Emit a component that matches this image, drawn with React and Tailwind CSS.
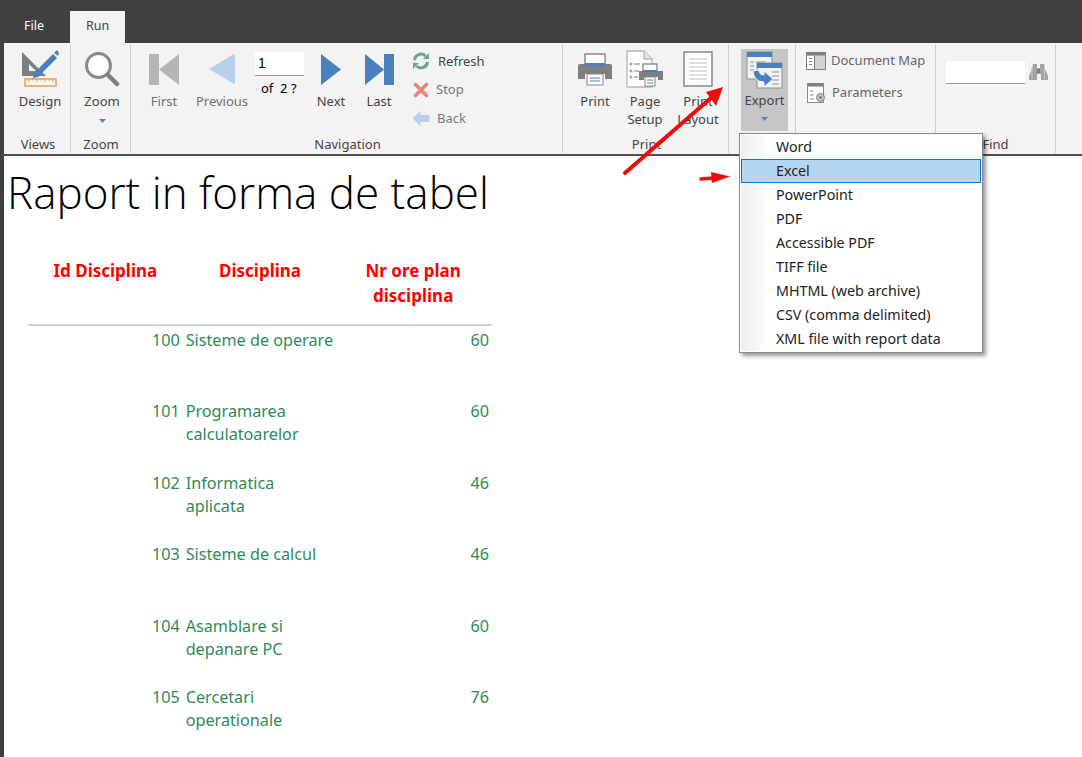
import React from 'react';

const DesignIcon = () => (
  <svg width="40" height="40" viewBox="0 0 40 40">
    <path d="M2 3 L2 27 L26 27 Z M9 15 L9 22 L16 22 Z" fill="#7f7f7f" fillRule="evenodd" />
    <path d="M14 24 L33 5 L37 9 L18 28 L13 29 Z" fill="#4a80bd" />
    <path d="M34 4 L37 1 L39 4 L38 7 Z" fill="#4a80bd" />
    <rect x="5" y="30" width="31" height="7" fill="#fdf6ee" stroke="#ee9d57" strokeWidth="1.500" />
    <path d="M9 30v3M13 30v2M17 30v3M21 30v2M25 30v3M29 30v2M33 30v3" stroke="#ee9d57" strokeWidth="1" />
  </svg>
);

const ZoomIcon = () => (
  <svg width="36" height="36" viewBox="0 0 36 36">
    <circle cx="14.500" cy="14.500" r="12" fill="#fff" stroke="#8a8a8a" strokeWidth="3" />
    <path d="M24 24 L33 33" stroke="#7f7f7f" strokeWidth="4.500" strokeLinecap="round" />
  </svg>
);

const FirstIcon = () => (
  <svg width="32" height="33" viewBox="0 0 32 33">
    <path d="M1 1h10v31H1z M11 16.500 L31 1 V32 Z" fill="#b5b5b5" />
  </svg>
);

const PrevIcon = () => (
  <svg width="28" height="32" viewBox="0 0 28 32">
    <path d="M1 16 L26 1 Q27 1 27 2 V30 Q27 31 26 31 Z" fill="#b9cfee" />
  </svg>
);

const NextIcon = () => (
  <svg width="22" height="33" viewBox="0 0 22 33">
    <path d="M1 1 L21 16.500 L1 32 Z" fill="#4a80bd" />
  </svg>
);

const LastIcon = () => (
  <svg width="31" height="33" viewBox="0 0 31 33">
    <path d="M1 1 L20 16.500 L1 32 Z M20 1h10v31H20z" fill="#4a80bd" />
  </svg>
);

const RefreshIcon = () => (
  <svg width="18" height="18" viewBox="0 0 18 18" fill="none">
    <path d="M2.500 8 A6.500 6.500 0 0 1 13.500 4" stroke="#68a88d" strokeWidth="3" />
    <path d="M11 7h6V1z" fill="#68a88d" />
    <path d="M15.500 10 A6.500 6.500 0 0 1 4.500 14" stroke="#68a88d" strokeWidth="3" />
    <path d="M7 11H1v6z" fill="#68a88d" />
  </svg>
);

const StopIcon = () => (
  <svg width="16" height="16" viewBox="0 0 16 16">
    <path d="M2.500 2.500 L13.500 13.500 M13.500 2.500 L2.500 13.500" stroke="#e8847a" strokeWidth="3.600" strokeLinecap="round" />
  </svg>
);

const BackIcon = () => (
  <svg width="18" height="17" viewBox="0 0 18 17">
    <path d="M0.500 8.500 L8.500 1 V5 H17.500 V12 H8.500 V16 Z" fill="#b9cfee" />
  </svg>
);

const PrintIcon = () => (
  <svg width="36" height="33" viewBox="0 0 36 33">
    <rect x="8" y="1" width="20" height="14" fill="#fff" stroke="#8a8a8a" strokeWidth="1.500" />
    <path d="M3 11h30a2 2 0 0 1 2 2v13H28v-5H8v5H1V13a2 2 0 0 1 2-2z" fill="#7f7f7f" />
    <rect x="8" y="10" width="20" height="3" fill="#4a80bd" />
    <rect x="10" y="21" width="16" height="11" fill="#fff" stroke="#8a8a8a" />
    <path d="M13 25h10M13 28h10" stroke="#4a80bd" strokeWidth="1.200" />
  </svg>
);

const PageSetupIcon = () => (
  <svg width="38" height="38" viewBox="0 0 38 38">
    <path d="M1 1h17l8 8v28H1z" fill="#fff" stroke="#b5b5b5" strokeWidth="1.300" />
    <path d="M18 1v8h8" fill="#e4e4e4" stroke="#b5b5b5" strokeWidth="1.300" />
    <path d="M8 14h6M8 21h5M8 27h4" stroke="#a5a5a5" strokeWidth="1.400" />
    <circle cx="5" cy="14" r="1.600" fill="#a5a5a5" />
    <circle cx="5" cy="21" r="1.600" fill="#a5a5a5" />
    <circle cx="5" cy="27" r="1.600" fill="#a5a5a5" />
    <rect x="17" y="14" width="14" height="10" fill="#fff" stroke="#7f7f7f" strokeWidth="1.300" />
    <path d="M13 21h24v9h-5v-3H18v3h-5z" fill="#7f7f7f" />
    <rect x="17" y="20" width="14" height="2" fill="#4a80bd" />
    <rect x="19" y="27" width="10" height="9" fill="#fff" stroke="#8a8a8a" />
    <path d="M21 30h6M21 33h6" stroke="#4a80bd" />
  </svg>
);

const PrintLayoutIcon = () => (
  <svg width="30" height="36" viewBox="0 0 30 36">
    <rect x="1" y="1" width="28" height="34" fill="#fff" stroke="#8f8f8f" strokeWidth="1.600" />
    <path d="M6 8h18M6 12h18M6 16h18M6 20h18M6 24h18M6 28h18" stroke="#bdbdbd" strokeWidth="1.200" />
  </svg>
);

const ExportIcon = () => (
  <svg width="37" height="38" viewBox="0 0 37 38">
    <rect x="1" y="1" width="25" height="27" fill="#f2f2f2" stroke="#8f8f8f" />
    <rect x="1" y="1" width="25" height="5" fill="#4a80bd" />
    <path d="M4 11h4M4 15h4M4 19h4M10 11h10" stroke="#8f8f8f" strokeWidth="1.200" />
    <rect x="11" y="12" width="25" height="25" fill="#f2f2f2" stroke="#8f8f8f" />
    <rect x="11" y="12" width="25" height="5" fill="#4a80bd" />
    <path d="M26 21h7M26 25h7M26 29h7M26 33h7" stroke="#8f8f8f" strokeWidth="1.200" />
    <path d="M7 20 L13 19 Q13 24 18 24 V20 L27 28 L18 36 V31 Q8 31 7 20z" fill="#4a80bd" stroke="#f2f2f2" strokeWidth="1" />
  </svg>
);

const DocMapIcon = () => (
  <svg width="20" height="18" viewBox="0 0 20 18">
    <rect x="0.500" y="0.500" width="19" height="17" fill="#d4d4d4" stroke="#7f7f7f" />
    <rect x="0.500" y="0.500" width="19" height="3" fill="#7f7f7f" />
    <rect x="1" y="4" width="7" height="13" fill="#fff" />
    <path d="M3 6.500h3M3 9.500h3M3 12.500h3M8.500 4v13" stroke="#7f7f7f" />
  </svg>
);

const ParamsIcon = () => (
  <svg width="19" height="20" viewBox="0 0 19 20">
    <rect x="0.500" y="0.500" width="16" height="19" fill="#fff" stroke="#8a8a8a" />
    <rect x="0.500" y="0.500" width="16" height="3" fill="#7f7f7f" />
    <path d="M3 8h3M3 12h4M3 16h4" stroke="#8a8a8a" />
    <circle cx="13.500" cy="14.500" r="4" fill="#c4c4c4" stroke="#7f7f7f" />
    <circle cx="13.500" cy="14.500" r="1.400" fill="#7f7f7f" />
  </svg>
);

const BinocularsIcon = () => (
  <svg width="19" height="18" viewBox="0 0 19 18">
    <path d="M4 1h4v4h3V1h4l1 5 3 7v4h-7v-6H8v6H0v-4l3-7z" fill="#a3a3a3" />
    <path d="M8 6h3v4H8z" fill="#7f7f7f" />
    <path d="M3 3v13M15.500 3v13" stroke="#c8c8c8" />
  </svg>
);

const Caret = () => (
  <svg width="7" height="4" viewBox="0 0 7 4" className="mx-auto">
    <path d="M0 0h7L3.500 4z" fill="#5a82bf" />
  </svg>
);

function BigButton({ icon, label, width, muted }) {
  return (
    <div className={`flex flex-col items-center ${width}`}>
      <div className="flex h-[42px] items-center justify-center">{icon}</div>
      <div className={`mt-[2px] text-center leading-[18px] ${muted ? 'text-[#6f6f6f]' : 'text-[#444]'}`}>{label}</div>
    </div>
  );
}

function SmallButton({ icon, label, muted, textGap = 'ml-[3px]' }) {
  return (
    <div className={`flex h-[29px] items-center ${muted ? 'text-[#777]' : 'text-[#444]'}`}>
      <div className="flex w-[24px] justify-center">{icon}</div>
      <span className={textGap}>{label}</span>
    </div>
  );
}

function Group({ width, label, children, className = '', labelClass = '' }) {
  return (
    <div className={`relative flex h-[108px] shrink-0 flex-col border-r border-[#cdcdcd] ${width}`}>
      <div className={`flex h-[88px] ${className}`}>{children}</div>
      <div className={`mt-auto h-[20px] text-center leading-[22px] text-[#444] ${labelClass}`}>{label}</div>
    </div>
  );
}

const menuItems = ['Word', 'Excel', 'PowerPoint', 'PDF', 'Accessible PDF', 'TIFF file', 'MHTML (web archive)', 'CSV (comma delimited)', 'XML file with report data'];

const rows = [
  { id: 100, name: ['Sisteme de operare'], hours: 60 },
  { id: 101, name: ['Programarea', 'calculatoarelor'], hours: 60 },
  { id: 102, name: ['Informatica', 'aplicata'], hours: 46 },
  { id: 103, name: ['Sisteme de calcul'], hours: 46 },
  { id: 104, name: ['Asamblare si', 'depanare PC'], hours: 60 },
  { id: 105, name: ['Cercetari', 'operationale'], hours: 76 },
];

export default function App() {
  return (
    <div className="relative h-[757px] w-[1082px] overflow-hidden bg-white font-['Noto_Sans',sans-serif] text-[13px]">
      {/* Tabs */}
      <div className="flex h-[43px] items-end bg-[#404040]">
        <div className="flex h-[32px] w-[70px] items-start justify-center pt-[6px] pr-[2px] text-[12.5px] text-white">File</div>
        <div className="flex h-[32px] w-[55px] items-start justify-center bg-[#f3f3f3] pt-[6px] text-[12.5px] text-[#444]">Run</div>
      </div>

      {/* Ribbon */}
      <div className="border-b-2 border-[#505050] border-l-4 border-l-[#404040] bg-[#f3f3f3]">
        <div className="flex h-[111px] pt-[2px]">
          <Group width="w-[67px]" label="Views" className="pl-[6px] pt-[3px]" labelClass="pl-[2px]">
            <BigButton width="w-full" label="Design" icon={<DesignIcon />} />
          </Group>
          <Group width="w-[60px]" label="Zoom" className="pl-[3px] pt-[3px]" labelClass="pl-[1px]">
            <div className="w-full">
              <BigButton width="w-full" label="Zoom" icon={<ZoomIcon />} />
              <div className="mt-[9px]"><Caret /></div>
            </div>
          </Group>
          <Group width="w-[432px]" label="Navigation" className="pl-[4px] pt-[3px]" labelClass="pl-[2px]">
            <BigButton width="w-[58px]" label="First" muted icon={<FirstIcon />} />
            <BigButton width="w-[58px]" label="Previous" muted icon={<PrevIcon />} />
            <div className="ml-[4px] w-[49px] pt-[4px]">
              <div className="h-[24px] border-b border-[#9a9a9a] bg-white pl-[3px] font-['Liberation_Sans',sans-serif] text-[14px] leading-[23px] text-black">1</div>
              <div className="mt-[3px] pl-[6px] text-black">of&nbsp; 2 ?</div>
            </div>
            <BigButton width="w-[48px] ml-[3px]" label="Next" icon={<NextIcon />} />
            <BigButton width="w-[48px]" label="Last" icon={<LastIcon />} />
            <div className="ml-[6px] -mt-[1px] flex flex-col">
              <SmallButton label="Refresh" textGap="ml-[5px]" icon={<RefreshIcon />} />
              <SmallButton label="Stop" muted icon={<StopIcon />} />
              <SmallButton label="Back" muted textGap="ml-[4px]" icon={<BackIcon />} />
            </div>
          </Group>
          <Group width="w-[166px]" label="Print" className="pl-[7px] pt-[3px]" labelClass="pl-[2px]">
            <BigButton width="w-[50px]" label="Print" icon={<PrintIcon />} />
            <BigButton width="w-[50px]" label={<>Page<br />Setup</>} icon={<PageSetupIcon />} />
            <BigButton width="w-[52px] ml-[2px]" label={<>Print<br />Layout</>} icon={<PrintLayoutIcon />} />
          </Group>
          <Group width="w-[67px]" label="" className="pl-[12px] pt-[4px]">
            <div className="h-[82px] w-[47px] bg-[#c6c6c6] pt-[1px]">
              <div className="flex h-[36px] justify-center pt-[1px]"><ExportIcon /></div>
              <div className="mt-[5px] text-center leading-[18px] text-[#444]">Export</div>
              <div className="mt-[8px]"><Caret /></div>
            </div>
          </Group>
          <Group width="w-[140px]" label="" className="flex-col pl-[10px] pt-[6px]">
            <div className="flex h-[20px] items-center text-[#666]">
              <DocMapIcon />
              <span className="ml-[5px]">Document Map</span>
            </div>
            <div className="mt-[12px] flex h-[20px] items-center text-[#666]">
              <span className="ml-[1px]"><ParamsIcon /></span>
              <span className="ml-[6px]">Parameters</span>
            </div>
          </Group>
          <Group width="w-[120px]" label="Find" className="pl-[10px] pt-[16px]">
            <div className="h-[23px] w-[79px] border-b border-[#9a9a9a] bg-white" />
            <div className="ml-[4px] mt-[2px]"><BinocularsIcon /></div>
          </Group>
        </div>
      </div>

      {/* Report */}
      <div className="h-[601px] border-l-4 border-[#404040] pl-[4px] pt-[6px]">
        <h1 className="-ml-[1px] h-[66px] font-['Open_Sans',sans-serif] text-[44px] font-light leading-[60px] text-black">
          Raport in forma de tabel
        </h1>
        <div className="ml-[20px] w-[464px]">
          <div className="grid h-[98px] grid-cols-3 border-b-2 border-[#d0d0d0] pt-[30px] text-center text-[17px] font-bold leading-[25px] text-[#ff0000]">
            <div>Id Disciplina</div>
            <div>Disciplina</div>
            <div className="pr-[3px]">Nr ore plan<br />disciplina</div>
          </div>
          {rows.map(r => (
            <div key={r.id} className="grid h-[71.4px] grid-cols-3 pt-[3px] text-[16.2px] leading-[23px] text-[#2e8b57]">
              <div className="pr-[3px] text-right">{r.id}</div>
              <div className="whitespace-nowrap pl-[3px]">
                {r.name.map(line => <div key={line}>{line}</div>)}
              </div>
              <div className="pr-[3px] text-right">{r.hours}</div>
            </div>
          ))}
        </div>
      </div>

      {/* Export menu */}
      <div className="absolute left-[739px] top-[133px] w-[244px] border border-[#8a8a8a] bg-white p-[1px] text-[14.25px] text-[#222] shadow-[3px_3px_4px_rgba(0,0,0,0.4)]">
        <div className="bg-[linear-gradient(to_right,#efefef,#fafafa_22px,#ffffff_24px)]">
          {menuItems.map(item => (
            <div
              key={item}
              className={`flex h-[24px] items-center pb-[1px] ${item === 'Excel' ? 'border border-[#0a78d0] bg-[#b5d6f2] pl-[34px]' : 'pl-[35px]'}`}
            >
              {item}
            </div>
          ))}
        </div>
      </div>

      {/* Red arrows drawn on the screenshot */}
      <svg className="absolute left-0 top-0" width="1082" height="757" fill="none">
        <path d="M625 173 L712 97" stroke="#f00a0a" strokeWidth="4" strokeLinecap="round" />
        <path d="M723 87 L706 92 L716 106 Z" fill="#f00a0a" />
        <path d="M701 179 L714 178" stroke="#f00a0a" strokeWidth="3.500" strokeLinecap="round" />
        <path d="M730 176.500 L711 172 L712 183 Z" fill="#f00a0a" />
      </svg>
    </div>
  );
}
